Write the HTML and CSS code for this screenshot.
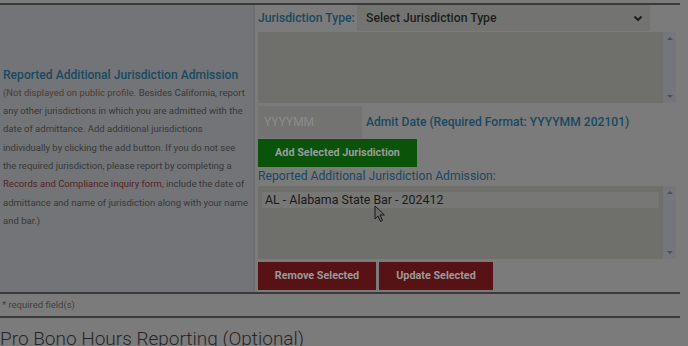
FILE: index.html
```html
<!DOCTYPE html>
<html>
<head>
    <title>Additional Jurisdiction Admission</title>
    <meta http-equiv="Content-Type" content="text/html; charset=utf-8">
    <link rel="stylesheet" href="styles.css">
</head>
<body>

<div class="wrap">
    <div class="row">
        <div class="side">
            <div class="side-text">
                <h3>Reported Additional Jurisdiction Admission</h3>
                <p><span class="note">(Not displayed on public profile.</span> Besides California, report any other jurisdictions in which you are admitted with the date of admittance. Add additional jurisdictions individually by clicking the add button. If you do not see the required jurisdiction, please report by completing a <a href="#">Records and Compliance inquiry form</a>, include the date of admittance and name of jurisdiction along with your name and bar.)</p>
            </div>
        </div>

        <div class="main">
            <div class="type-row">
                <label>Jurisdiction Type:</label>
                <div class="select">
                    <span>Select Jurisdiction Type</span>
                    <svg width="10" height="7" viewBox="0 0 10 7"><path d="M1.5 1.5 L5 5 L8.5 1.5" fill="none" stroke="#1e1e1e" stroke-width="2"/></svg>
                </div>
            </div>

            <div class="listbox list-types">
                <div class="options"></div>
                <div class="scroll"><span class="up"></span><span class="down"></span></div>
            </div>

            <div class="date-row">
                <div class="date-input">YYYYMM</div>
                <label>Admit Date (Required Format: YYYYMM 202101)</label>
            </div>

            <a href="#" class="btn green">Add Selected Jurisdiction</a>

            <div class="list-label">Reported Additional Jurisdiction Admission:</div>

            <div class="listbox list-reported">
                <div class="options">
                    <div class="option selected">AL - Alabama State Bar - 202412</div>
                </div>
                <div class="scroll"><span class="up"></span><span class="down"></span></div>
            </div>

            <div class="btn-row">
                <a href="#" class="btn red">Remove Selected</a>
                <a href="#" class="btn red">Update Selected</a>
            </div>
        </div>
    </div>

    <div class="required">* required field(s)</div>

    <h2 class="section">Pro Bono Hours Reporting (Optional)</h2>
</div>

<svg class="cursor" width="12" height="18" viewBox="0 0 12 18"><path d="M1 1 L1 14 L4 11 L6.5 16.5 L8.5 15.5 L6 10 L10.5 10 Z" fill="#6a6a6a" stroke="#1a1a1a" stroke-width="1"/></svg>

</body>
</html>
```

FILE: styles.css
```css
body, html {
    margin: 0;
    padding: 0;
    background-color: #7b7b7b;
    font-family: 'Roboto', 'Liberation Sans', Arial, sans-serif;
    overflow: hidden;
}

.wrap {
    width: 680px;
    padding-top: 3px;
}

.row {
    display: flex;
    border-top: 2px solid #3a3a3a;
    border-bottom: 2px solid #3a3a3a;
}

.side {
    width: 250px;
    padding: 0 0 0 3px;
    background-color: #727477;
    border-right: 2px solid #6d6f72;
    display: flex;
    align-items: center;
}

.side-text {
    width: 246px;
}

.side h3 {
    margin: 0 0 1px 0;
    font-size: 12.1px;
    font-weight: 500;
    color: #19495f;
    line-height: 16px;
    white-space: nowrap;
}

.side p {
    margin: 0;
    font-size: 9.5px;
    line-height: 18.3px;
    color: #383838;
}

.side .note {
    color: #4f3b2d;
}

.side a {
    color: #552323;
    text-decoration: none;
}

.main {
    flex: 1;
    padding: 0 4px 2px 3px;
}

.type-row {
    display: flex;
    align-items: center;
    height: 26px;
}

.type-row label {
    font-size: 12.2px;
    font-weight: 500;
    color: #19495f;
    width: 99px;
    white-space: nowrap;
}

.select {
    width: 277px;
    height: 26px;
    padding: 0 7px 0 9px;
    background-color: #737371;
    display: flex;
    align-items: center;
    justify-content: space-between;
    font-size: 12.2px;
    font-weight: 500;
    color: #1e1e1e;
}

.listbox {
    display: flex;
    margin-top: 1px;
    background-color: #6f706b;
}

.list-types {
    height: 71px;
}

.list-reported {
    height: 73px;
    margin-top: 2px;
}

.options {
    flex: 1;
    padding: 6px 4px 0 4px;
}

.option {
    height: 16px;
    line-height: 16px;
    padding-left: 3px;
    font-size: 12.4px;
    color: #1a1a1a;
}

.option.selected {
    background-color: #777776;
}

.scroll {
    width: 13px;
    background-color: #75767b;
    display: flex;
    flex-direction: column;
    justify-content: space-between;
    align-items: center;
    padding: 5px 0 5px 0;
}

.scroll span {
    width: 0;
    height: 0;
    border-left: 3px solid transparent;
    border-right: 3px solid transparent;
}

.scroll .up {
    border-bottom: 3px solid #4e4f53;
}

.scroll .down {
    border-top: 3px solid #4e4f53;
}

.date-row {
    display: flex;
    align-items: center;
    margin-top: 3px;
}

.date-input {
    width: 98px;
    height: 32px;
    line-height: 32px;
    padding-left: 6px;
    margin-right: 4px;
    background-color: #737372;
    font-size: 12px;
    color: #8c8c8c;
}

.date-row label {
    font-size: 12.1px;
    font-weight: 500;
    color: #19495f;
}

.btn {
    display: inline-block;
    height: 28px;
    line-height: 28px;
    text-align: center;
    font-size: 10.8px;
    font-weight: bold;
    color: #9a9a9a;
    text-decoration: none;
}

.green {
    width: 159px;
    margin-top: 1px;
    background-color: #0a540a;
}

.list-label {
    margin-top: 1px;
    height: 16px;
    line-height: 16px;
    font-size: 12.2px;
    color: #19495f;
}

.btn-row {
    display: flex;
    gap: 3px;
    margin-top: 3px;
}

.red {
    width: 118px;
    background-color: #571216;
}

.red + .red {
    width: 114px;
}

.required {
    height: 22px;
    line-height: 22px;
    padding-left: 2px;
    font-size: 9.5px;
    color: #3f3f3f;
    border-bottom: 2px solid #3a3a3a;
}

.section {
    margin: 9px 0 0 0;
    font-size: 19px;
    font-weight: 300;
    color: #262626;
    white-space: nowrap;
}

.cursor {
    position: absolute;
    left: 374px;
    top: 205px;
}
```
